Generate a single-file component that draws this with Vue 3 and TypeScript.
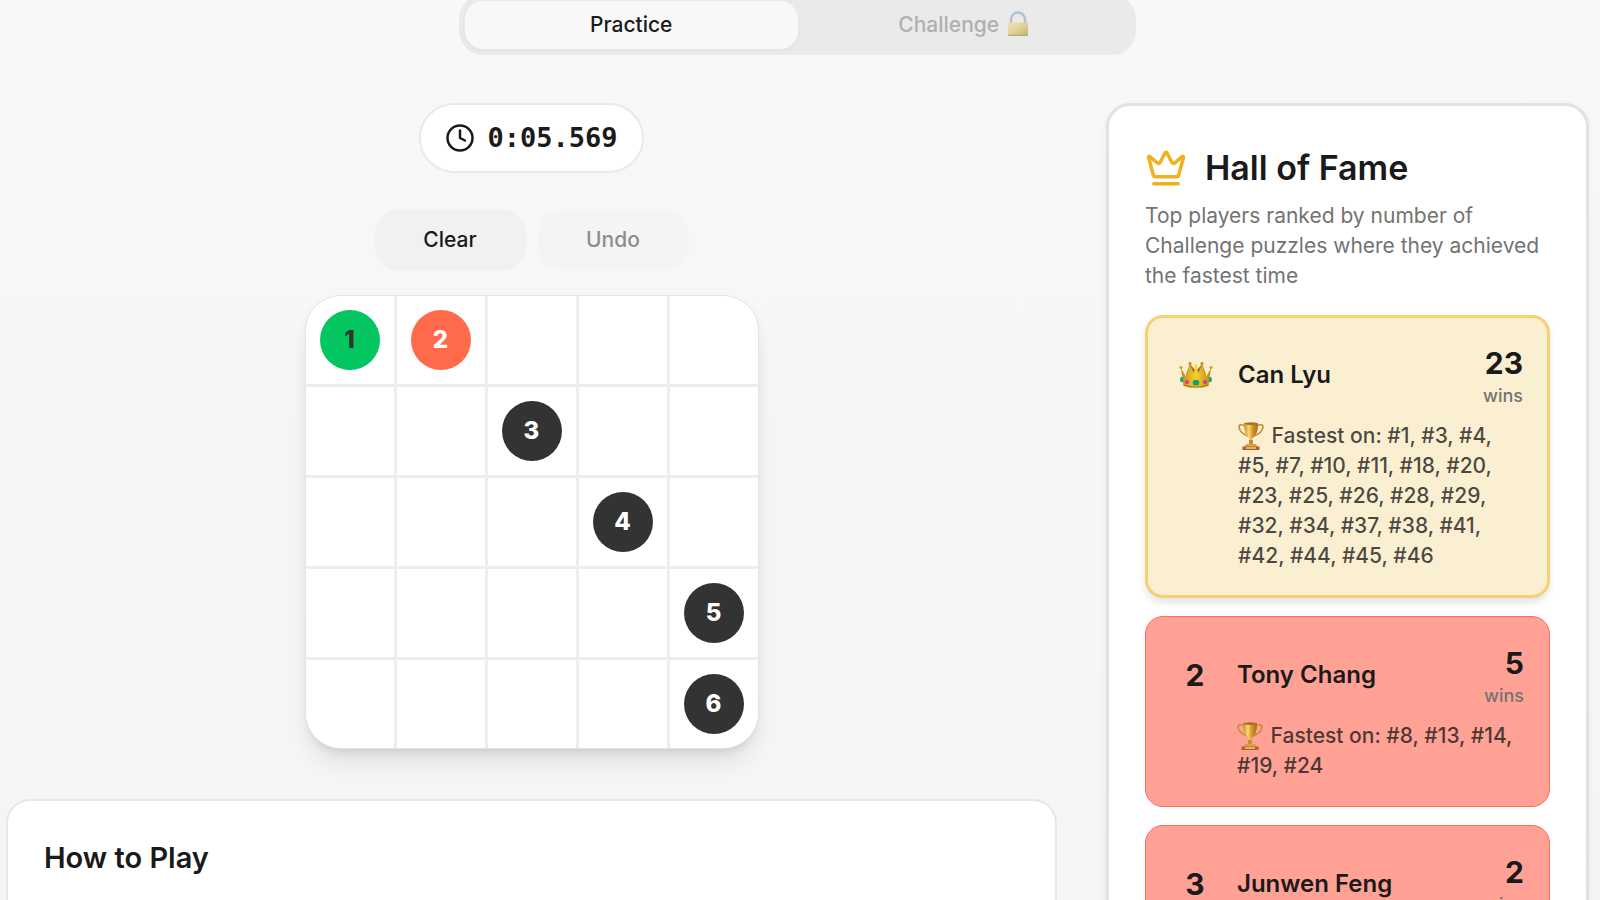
<script setup lang="ts">
import { ref } from 'vue'

interface Player {
  rank: number
  name: string
  wins: number
  puzzles: number[]
}

const tab = ref<'practice' | 'challenge'>('practice')
const time = ref('0:05.569')

const size = 5
const numbers: Record<number, number> = { 0: 1, 1: 2, 7: 3, 13: 4, 19: 5, 24: 6 }
const cells = Array.from({ length: size * size }, (_, i) => numbers[i] ?? 0)

const players: Player[] = [
  {
    rank: 1,
    name: 'Can Lyu',
    wins: 23,
    puzzles: [1, 3, 4, 5, 7, 10, 11, 18, 20, 23, 25, 26, 28, 29, 32, 34, 37, 38, 41, 42, 44, 45, 46],
  },
  { rank: 2, name: 'Tony Chang', wins: 5, puzzles: [8, 13, 14, 19, 24] },
  { rank: 3, name: 'Junwen Feng', wins: 2, puzzles: [] },
]

const list = (p: number[]) => p.map((n) => `#${n}`).join(', ')

function dotClass(n: number) {
  return n === 1 ? 'start' : n === 2 ? 'next' : 'todo'
}
</script>

<template>
  <div class="page">
    <nav class="tabs" aria-label="Mode">
      <button type="button" class="tab" :class="{ active: tab === 'practice' }">Practice</button>
      <button type="button" class="tab" disabled>
        Challenge
        <svg class="lock" viewBox="0 0 22 26" aria-hidden="true">
          <defs>
            <linearGradient id="lockBody" x1="0" y1="0" x2="1" y2="1">
              <stop offset="0" stop-color="#f0df8c" />
              <stop offset="0.5" stop-color="#d9c35c" />
              <stop offset="1" stop-color="#a89030" />
            </linearGradient>
          </defs>
          <path d="M4 13V8.500a7 7 0 0 1 14 0V13" fill="none" stroke="#8fa6bd" stroke-width="2.400" />
          <rect x="1" y="11.500" width="20" height="13.500" rx="1" fill="url(#lockBody)" />
          <path d="M1 24.200h20" stroke="#8f7a2c" stroke-width="1.200" />
        </svg>
      </button>
    </nav>

    <div class="columns">
      <main class="game">
        <div class="timer" role="timer">
          <svg class="clock" viewBox="0 0 24 24" aria-hidden="true">
            <circle cx="12" cy="12" r="10" />
            <path d="M12 6v6l4 2" />
          </svg>
          <span>{{ time }}</span>
        </div>

        <div class="actions">
          <button type="button" class="action">Clear</button>
          <button type="button" class="action" disabled>Undo</button>
        </div>

        <div class="board">
          <button v-for="(n, i) in cells" :key="i" type="button" class="cell" :aria-label="n ? `Cell ${n}` : 'Empty cell'">
            <span v-if="n" class="dot" :class="dotClass(n)">{{ n }}</span>
          </button>
        </div>

        <section class="howto">
          <h2>How to Play</h2>
        </section>
      </main>

      <aside class="fame">
        <header class="fame-head">
          <svg class="crown-icon" viewBox="0 0 24 24" aria-hidden="true">
            <path
              d="M11.562 3.266a.5.5 0 0 1 .876 0L15.390 8.870a1 1 0 0 0 1.516.294L21.183 5.500a.5.5 0 0 1 .798.519l-2.834 10.246a1 1 0 0 1-.956.734H5.810a1 1 0 0 1-.957-.734L2.020 6.020a.5.5 0 0 1 .798-.519l4.276 3.664a1 1 0 0 0 1.516-.294z"
            />
            <path d="M5 21h14" />
          </svg>
          <h2>Hall of Fame</h2>
        </header>
        <p class="lead">Top players ranked by number of Challenge puzzles where they achieved the fastest time</p>

        <ol class="players">
          <li v-for="p in players" :key="p.rank" class="player" :class="{ first: p.rank === 1 }">
            <div class="rank">
              <svg v-if="p.rank === 1" class="crown" viewBox="0 0 34 28" role="img" aria-label="1">
                <defs>
                  <linearGradient id="crownGold" x1="0" y1="0" x2="1" y2="0">
                    <stop offset="0" stop-color="#c08a18" />
                    <stop offset="0.5" stop-color="#f8cf2e" />
                    <stop offset="1" stop-color="#bd8415" />
                  </linearGradient>
                </defs>
                <path d="M7 13 11 3l6 7 6-7 4 10z" fill="#a8741a" />
                <path d="M2 7 6.500 15 11 4l3.500 8L17 6l2.500 6L23 4l4.500 11L32 7l-2.500 18Q17 29.500 4.500 25z" fill="url(#crownGold)" />
                <path d="M4.500 24Q17 28 29.500 24" fill="none" stroke="#ad7614" stroke-width="1.200" />
                <circle cx="2" cy="6.500" r="1.500" fill="#d29a26" />
                <circle cx="11" cy="2.500" r="1.600" fill="#c78e20" />
                <circle cx="23" cy="2.500" r="1.600" fill="#c78e20" />
                <circle cx="32" cy="6.500" r="1.500" fill="#d29a26" />
                <circle cx="17" cy="5.500" r="2" fill="#ffdc38" />
                <ellipse cx="17" cy="21.700" rx="3.300" ry="2.900" fill="#08a56c" />
                <ellipse cx="8" cy="21" rx="2" ry="1.900" fill="#d833a2" />
                <ellipse cx="26" cy="21" rx="2" ry="1.900" fill="#d833a2" />
                <ellipse cx="2.700" cy="18.500" rx="1.600" ry="2.800" fill="#12ad78" />
                <ellipse cx="31.300" cy="18.500" rx="1.600" ry="2.800" fill="#12ad78" />
              </svg>
              <template v-else>{{ p.rank }}</template>
            </div>
            <div class="name">{{ p.name }}</div>
            <div class="score">
              <div class="count">{{ p.wins }}</div>
              <div class="unit">wins</div>
            </div>
            <p v-if="p.puzzles.length" class="fastest">
              <svg class="trophy" viewBox="0 0 26 28" aria-hidden="true">
                <defs>
                  <linearGradient :id="`cup${p.rank}`" x1="0" y1="0" x2="1" y2="0">
                    <stop offset="0" stop-color="#c98a22" />
                    <stop offset="0.350" stop-color="#fbd774" />
                    <stop offset="0.600" stop-color="#d99a2b" />
                    <stop offset="1" stop-color="#a4661a" />
                  </linearGradient>
                </defs>
                <path
                  d="M6.500 3.500Q1 1.500 1 5q.5 6 10 9.500M19.500 3.500Q25 1.500 25 5q-.5 6-10 9.500"
                  fill="none"
                  stroke="#c79030"
                  stroke-width="1.700"
                />
                <path d="M6 1.500h14q0 11-5 14.200-1.300 1-1.300 3v4.300h-1.400v-4.300q0-2-1.300-3Q6 12.500 6 1.500z" :fill="`url(#cup${p.rank})`" />
                <ellipse cx="13" cy="1.600" rx="7.200" ry="1.300" fill="#a9701f" />
                <path d="M11 18h4v5h-4z" fill="#c98c2e" />
                <path d="M8 22h10l1.500 3h-13z" fill="#dba04a" />
                <path d="M4.500 24.500h17V28h-17z" fill="#a9602b" />
                <path d="M8 25h10v2H8z" fill="#e3b35c" />
              </svg>
              Fastest on: {{ list(p.puzzles) }}
            </p>
          </li>
        </ol>
      </aside>
    </div>
  </div>
</template>

<style>
body {
  margin: 0;
  background: #f7f7f7;
}
</style>

<style scoped>
.page {
  box-sizing: border-box;
  height: 100vh;
  overflow: hidden;
  padding: 0 11px 0 6px;
  background: linear-gradient(#f8f8f8, #f5f5f5);
  color: #1a1a1a;
  font-family: Inter, 'Liberation Sans', sans-serif;
  font-size: 21px;
  line-height: 30px;
}
.page *,
.page *::before {
  box-sizing: border-box;
}
h2,
p,
ol {
  margin: 0;
  padding: 0;
}
button {
  border: 0;
  padding: 0;
  color: inherit;
  font: inherit;
}
.tabs {
  display: grid;
  grid-template-columns: 1fr 1fr;
  max-width: 677px;
  margin: -5px auto 48px;
  padding: 6px;
  border-radius: 24px;
  background: #eaeaea;
}
.tab {
  display: flex;
  align-items: center;
  justify-content: center;
  gap: 8px;
  height: 48px;
  border-radius: 18px;
  background: transparent;
  font-weight: 500;
}
.tab.active {
  background: #f8f8f8;
  box-shadow: 0 2px 4px rgba(0, 0, 0, 0.04);
}
.tab:disabled {
  color: #b0b0b0;
}
.lock {
  width: 22px;
  height: 26px;
  margin-bottom: 2px;
  opacity: 0.6;
}
.columns {
  display: grid;
  grid-template-columns: minmax(0, 1fr) 483px;
  gap: 49px;
}
.game {
  display: flex;
  flex-direction: column;
  align-items: center;
}
.timer {
  display: flex;
  align-items: center;
  gap: 12px;
  height: 70px;
  padding: 0 24px;
  border: 2px solid #e9e9e9;
  border-radius: 35px;
  background: #fff;
  font-family: 'DejaVu Sans Mono', 'Liberation Mono', monospace;
  font-size: 27px;
  font-weight: 700;
}
.clock {
  width: 30px;
  height: 30px;
  fill: none;
  stroke: #1a1a1a;
  stroke-width: 2;
  stroke-linecap: round;
  stroke-linejoin: round;
}
.actions {
  display: flex;
  gap: 12px;
  margin: 37px 0 25px;
}
.action {
  width: 151px;
  height: 60px;
  border-radius: 22px;
  background: #f1f1f1;
  font-weight: 500;
}
.action:disabled {
  background: #f4f4f4;
  color: #8d8d8d;
}
.board {
  display: grid;
  grid-template-columns: repeat(5, 88px);
  grid-auto-rows: 88px;
  gap: 3px;
  overflow: hidden;
  border: 1px solid #e4e4e4;
  border-radius: 36px;
  background: #eee;
  box-shadow:
    0 15px 24px -4px rgba(0, 0, 0, 0.1),
    0 6px 9px -4px rgba(0, 0, 0, 0.1);
}
.cell {
  display: flex;
  align-items: center;
  justify-content: center;
  background: #fff;
}
.dot {
  display: flex;
  align-items: center;
  justify-content: center;
  width: 60px;
  height: 60px;
  border-radius: 50%;
  color: #fff;
  font-size: 24px;
  font-weight: 800;
}
.start {
  background: #03c660;
  color: #333;
}
.next {
  background: #ff6b4a;
}
.todo {
  background: #333;
}
.howto {
  align-self: stretch;
  min-height: 160px;
  margin-top: 50px;
  padding: 34px 36px;
  border: 2px solid #e7e7e7;
  border-radius: 24px;
  background: #fff;
}
.howto h2 {
  font-size: 29px;
  font-weight: 600;
  line-height: 45px;
}
.fame {
  padding: 35px 36px;
  border: 3px solid #e2e2e2;
  border-radius: 24px;
  background: #fff;
  box-shadow: 0 2px 6px rgba(0, 0, 0, 0.06);
}
.fame-head {
  display: flex;
  align-items: center;
  gap: 18px;
  margin-bottom: 6px;
}
.fame-head h2 {
  font-size: 34px;
  font-weight: 600;
  line-height: 54px;
}
.crown-icon {
  width: 42px;
  height: 42px;
  fill: none;
  stroke: #efb11d;
  stroke-width: 2;
  stroke-linecap: round;
  stroke-linejoin: round;
}
.lead {
  color: #737373;
}
.players {
  display: grid;
  gap: 18px;
  margin-top: 24px;
  list-style: none;
}
.player {
  display: grid;
  grid-template-columns: 48px 1fr auto;
  column-gap: 18px;
  align-items: center;
  padding: 25px;
  border: 1px solid #ff6b5c;
  border-radius: 18px;
  background: #ffa194;
}
.player.first {
  padding: 24px;
  border: 3px solid #f5d175;
  background: #fbefd1;
  box-shadow: 0 5px 8px -1px rgba(0, 0, 0, 0.12);
}
.rank {
  display: flex;
  justify-content: center;
  font-size: 30px;
  font-weight: 700;
}
.crown {
  width: 34px;
  height: 28px;
}
.name {
  font-size: 24px;
  font-weight: 600;
}
.score {
  text-align: right;
}
.count {
  font-size: 30px;
  font-weight: 700;
  line-height: 42px;
}
.unit {
  color: #737373;
  font-size: 18px;
  font-weight: 500;
  line-height: 24px;
}
.fastest {
  grid-column: 2 / -1;
  margin-top: 13px;
  color: rgba(26, 26, 26, 0.8);
  font-weight: 500;
}
.trophy {
  width: 26px;
  height: 28px;
  margin: -4px 2px -4px 0;
  vertical-align: -3px;
}
</style>
